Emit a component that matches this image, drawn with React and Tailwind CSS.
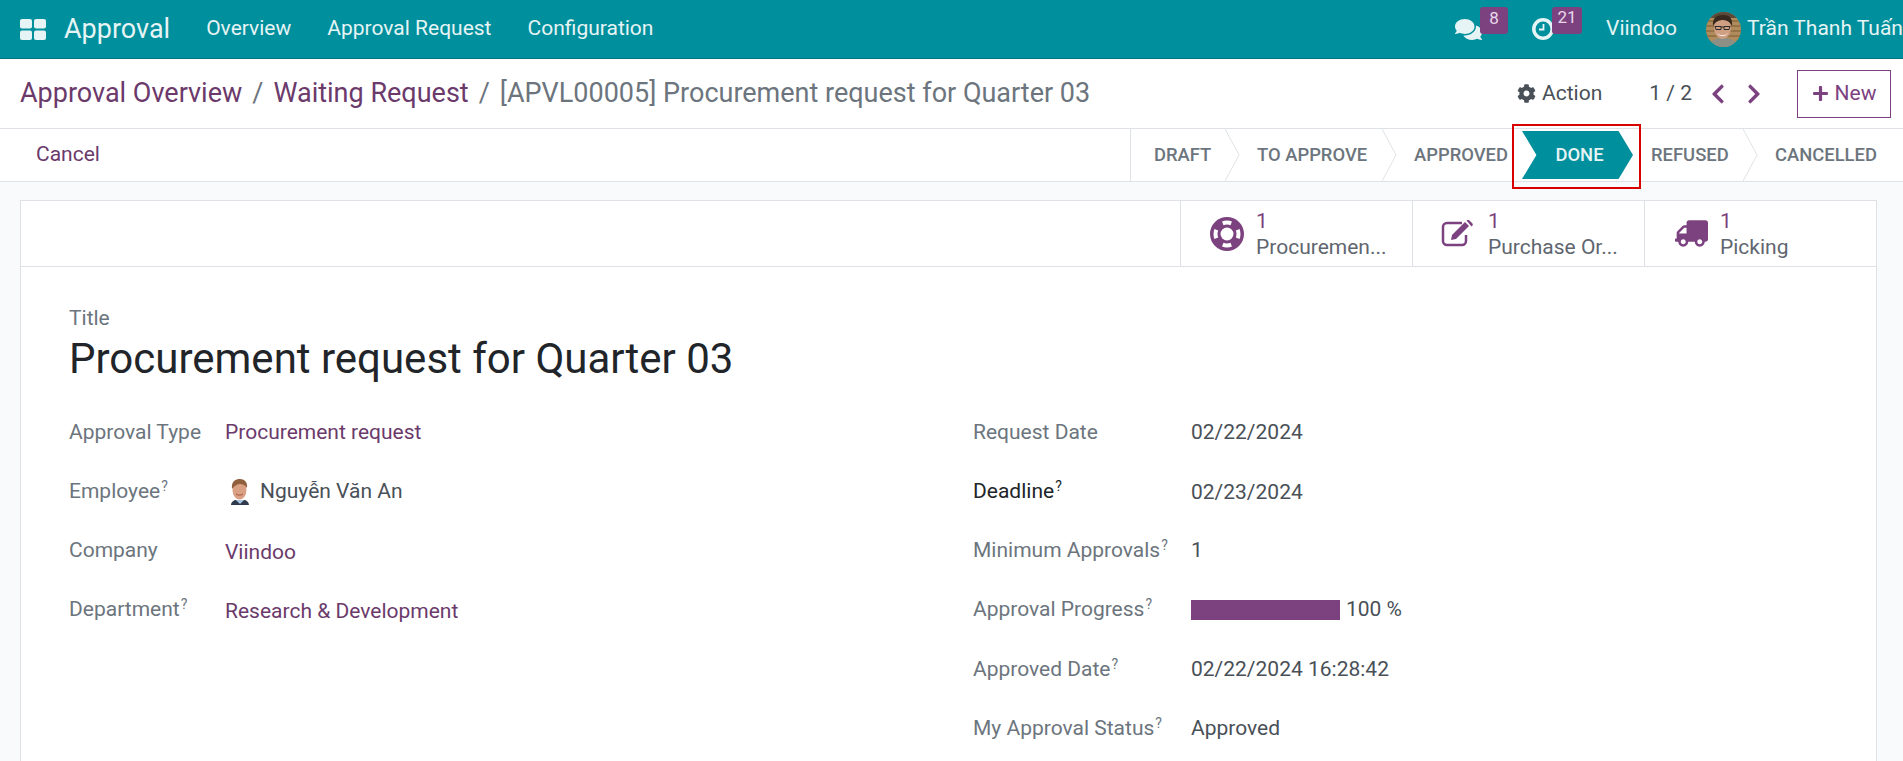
import React from "react";
import { FaComments, FaCog, FaChevronLeft, FaChevronRight, FaPlus, FaTruck } from "react-icons/fa";

function AvatarMan() {
  return (
    <svg viewBox="0 0 35 35" className="w-[35px] h-[35px] shrink-0 rounded-full">
      <rect width="35" height="35" fill="#b08c5c" />
      <path d="M0 9h35M0 14h35M0 19h35M0 24h35" stroke="#8d6a40" strokeWidth="1.500" />
      <path d="M0 0h35v6H0z" fill="#5c4a38" />
      <path d="M3 35c1-7 7-9 14-9s13 2 15 9z" fill="#8b8f86" />
      <ellipse cx="16.500" cy="16" rx="8.500" ry="11" fill="#cf9f83" />
      <path d="M7 14C6 6 11 3 17 3s10 3 9 11c-2-4-5-6-9-6s-8 2-10 6z" fill="#38291e" />
      <path d="M9 14.500h6v3H10zM18 14.500h6l-1 3h-5zM15 15h3" fill="none" stroke="#2a2a2a" strokeWidth="1" />
      <path d="M11 21c3 3 8 3 11 0-2 4-9 4-11 0z" fill="#fff" />
    </svg>
  );
}

function AvatarEmployee() {
  return (
    <svg viewBox="0 0 22 27" className="w-[22px] h-[27px] shrink-0">
      <path d="M2 27c0-3 3-5 5-5l4 2 4-2c2 0 5 2 5 5z" fill="#2f3a4c" />
      <path d="M7 22l4 4 4-4z" fill="#a9c4e0" />
      <ellipse cx="10.500" cy="12" rx="7" ry="9.500" fill="#d9a084" />
      <path d="M3 11C2 3 7 1 11 1s8 3 7 9c-2-3-4-4-7-4-3 0-6 2-8 5z" fill="#8f5f3e" />
      <path d="M7 16c2 1.500 5 1.500 7 0" fill="none" stroke="#a4563f" strokeWidth="1" />
    </svg>
  );
}

function ClockIcon() {
  return (
    <svg viewBox="0 0 22 22" className="w-[22px] h-[22px] block" fill="none" stroke="#e6f4f5">
      <circle cx="11" cy="11" r="9.200" strokeWidth="3.500" />
      <path d="M11.500 6v5.500H7" strokeWidth="1.800" />
    </svg>
  );
}

function LifeRing() {
  return (
    <svg viewBox="0 0 34 34" className="w-[34px] h-[34px]">
      <circle cx="17" cy="17" r="17" fill="#7c4280" />
      <circle cx="17" cy="17" r="11.500" fill="none" stroke="#fff" strokeWidth="4" pathLength="100" strokeDasharray="12 13" strokeDashoffset="6" />
      <circle cx="17" cy="17" r="6.500" fill="#fff" />
    </svg>
  );
}

function EditIcon() {
  return (
    <svg viewBox="0 0 33 27" className="w-[33px] h-[27px] -ml-[3px]" fill="none">
      <path d="M25 15v6a4 4 0 0 1-4 4H6a4 4 0 0 1-4-4V7a4 4 0 0 1 4-4h15" stroke="#7c4280" strokeWidth="2.500" />
      <path d="M10 20l1-5L24 2l4 4L15 19z" fill="#7c4280" />
      <path d="M25.500 0.500l1-.5a2 2 0 0 1 2 .5l3 3a2 2 0 0 1 0 2l-1 1z" fill="#7c4280" />
    </svg>
  );
}

function Help() {
  return <sup className="text-[14px] leading-none top-[-7px] relative align-baseline ml-[1px]">?</sup>;
}

function Row({ label, help, dark, width, low = "", children }) {
  return (
    <div className="flex items-center h-[59.200px]">
      <div className={`shrink-0 ${width} ${dark ? "text-[#212529]" : "text-[#6c757d]"}`}>
        {label}
        {help && <Help />}
      </div>
      <div className={`flex items-center text-[#495057] ${low}`}>{children}</div>
    </div>
  );
}

function Chevron() {
  return (
    <svg viewBox="0 0 16 53" preserveAspectRatio="none" className="absolute right-[-15px] top-0 h-full w-[15px] z-10" fill="none">
      <path d="M0 0 15 26.500 0 53" stroke="#dee2e6" strokeWidth="1" />
    </svg>
  );
}

function Stat({ icon, label }) {
  return (
    <div className="flex items-center w-[232px] border-l border-[#dee2e6] pl-[29px] gap-[12px]">
      <div className="w-[34px] flex justify-center text-[#7c4280] text-[33px]">{icon}</div>
      <div className="flex flex-col leading-[26px]">
        <span className="text-[#7c4280]">1</span>
        <span className="text-[#5f6670]">{label}</span>
      </div>
    </div>
  );
}

export default function App() {
  return (
    <div className="h-[761px] w-[1903px] overflow-hidden bg-[#f9fafb] font-['Roboto',sans-serif] text-[21px]">
      <nav className="flex items-center h-[59px] bg-[#008f9c] border-b border-[#00707c] text-white pl-[20px]">
        <svg viewBox="0 0 26 21" className="w-[26px] h-[21px] shrink-0" fill="#e6f4f5">
          <rect x="0" y="0" width="12" height="9.500" rx="2" />
          <rect x="14" y="0" width="12" height="9.500" rx="2" />
          <rect x="0" y="11.500" width="12" height="9.500" rx="2" />
          <rect x="14" y="11.500" width="12" height="9.500" rx="2" />
        </svg>
        <span className="ml-[18px] text-[27px] text-[#e6f4f5]">Approval</span>
        <div className="flex ml-[36px] gap-[36px] text-[#e6f4f5]">
          <span>Overview</span>
          <span>Approval Request</span>
          <span>Configuration</span>
        </div>
        <div className="ml-auto flex items-center h-full">
          <div className="relative w-[27px] text-[27px] text-[#e6f4f5]">
            <FaComments />
            <span className="absolute left-[25px] top-[-9px] w-[28px] h-[27px] rounded-[3px] bg-[#7c4280] text-[17px] leading-[22px] text-center text-[#e8d9ea]">8</span>
          </div>
          <div className="relative ml-[50px] w-[22px]">
            <ClockIcon />
            <span className="absolute left-[20px] top-[-11px] w-[30px] h-[27px] rounded-[3px] bg-[#7c4280] text-[17px] leading-[20px] text-center text-[#e8d9ea]">21</span>
          </div>
          <span className="ml-[52px] text-[#e6f4f5]">Viindoo</span>
          <div className="ml-[29px]"><AvatarMan /></div>
          <span className="ml-[6px] w-[156px] whitespace-nowrap text-[#e6f4f5]">Trần Thanh Tuấn</span>
        </div>
      </nav>

      <div className="flex items-center h-[70px] bg-white border-b border-[#dee2e6] pl-[20px] pr-[12px]">
        <div className="flex items-center text-[27px] whitespace-nowrap">
          <span className="text-[#6b3a6b]">Approval Overview</span>
          <span className="text-[#6c757d] mx-[10px]">/</span>
          <span className="text-[#6b3a6b]">Waiting Request</span>
          <span className="text-[#6c757d] mx-[10px]">/</span>
          <span className="text-[#6c757d]">[APVL00005] Procurement request for Quarter 03</span>
        </div>
        <div className="ml-auto flex items-center text-[#495057]">
          <FaCog className="text-[19px]" />
          <span className="ml-[6px]">Action</span>
          <span className="ml-[47px]">1 / 2</span>
          <FaChevronLeft className="ml-[15px] text-[22px] text-[#7c4280]" />
          <FaChevronRight className="ml-[14px] text-[22px] text-[#7c4280]" />
          <button className="ml-[32px] flex items-center justify-center gap-[6px] w-[94px] h-[48px] border border-[#7c4280] text-[#7c4280]">
            <FaPlus className="text-[17px]" />
            <span>New</span>
          </button>
        </div>
      </div>

      <div className="flex items-stretch h-[53px] bg-white border-b border-[#dee2e6] text-[18.400px] font-medium text-[#6c757d] whitespace-nowrap">
        <span className="flex items-center pl-[36px] text-[21px] font-normal text-[#6b3a6b]">Cancel</span>
        <div className="ml-auto flex items-stretch">
          <div className="relative flex items-center w-[95px] pl-[23px] border-l border-[#dee2e6]">DRAFT<Chevron /></div>
          <div className="relative flex items-center w-[157px] pl-[32px]">TO APPROVE<Chevron /></div>
          <div className="relative flex items-center w-[140px] pl-[32px]">APPROVED</div>
          <div className="relative flex items-center justify-center w-[111px] my-[2px] pl-[4px] bg-[#008f9c] text-[#e6f4f5] [clip-path:polygon(0_0,87%_0,100%_50%,87%_100%,0_100%,13%_50%)]">DONE</div>
          <div className="relative flex items-center w-[110px] pl-[18px]">REFUSED<Chevron /></div>
          <div className="relative flex items-center w-[160px] pl-[32px]">CANCELLED</div>
        </div>
      </div>

      <div className="relative px-[20px] pt-[18px]">
        <div className="absolute left-[1512px] top-[-58px] w-[129px] h-[65px] border-2 border-[#d90000]" />
        <div className="bg-white border border-[#dee2e6] w-[1857px] pb-[60px]">
          <div className="flex justify-end h-[66px] border-b border-[#dee2e6]">
            <Stat icon={<LifeRing />} label="Procuremen..." />
            <Stat icon={<EditIcon />} label="Purchase Or..." />
            <Stat icon={<FaTruck className="-scale-x-100" />} label="Picking" />
          </div>
          <div className="pl-[48px] pt-[38px]">
            <div className="text-[#6c757d] leading-[26px]">Title</div>
            <div className="text-[42px] leading-[50px] mt-[3px] text-[#212529]">Procurement request for Quarter 03</div>
            <div className="flex mt-[19px]">
              <div className="w-[904px]">
                <Row label="Approval Type" width="w-[156px]"><span className="text-[#6b3a6b]">Procurement request</span></Row>
                <Row label="Employee" help width="w-[156px]"><span className="ml-[4px]"><AvatarEmployee /></span><span className="ml-[9px]">Nguyễn Văn An</span></Row>
                <Row label="Company" low="pt-[4px]" width="w-[156px]"><span className="text-[#6b3a6b]">Viindoo</span></Row>
                <Row label="Department" low="pt-[4px]" help width="w-[156px]"><span className="text-[#6b3a6b]">Research &amp; Development</span></Row>
              </div>
              <div>
                <Row label="Request Date" width="w-[218px]">02/22/2024</Row>
                <Row label="Deadline" low="pt-[2px]" help dark width="w-[218px]">02/23/2024</Row>
                <Row label="Minimum Approvals" help width="w-[218px]">1</Row>
                <Row label="Approval Progress" help width="w-[218px]">
                  <span className="w-[149px] h-[20px] bg-[#7c4280] block" />
                  <span className="ml-[6px]">100 %</span>
                </Row>
                <Row label="Approved Date" help width="w-[218px]">02/22/2024 16:28:42</Row>
                <Row label="My Approval Status" help width="w-[218px]">Approved</Row>
              </div>
            </div>
          </div>
        </div>
      </div>
    </div>
  );
}
